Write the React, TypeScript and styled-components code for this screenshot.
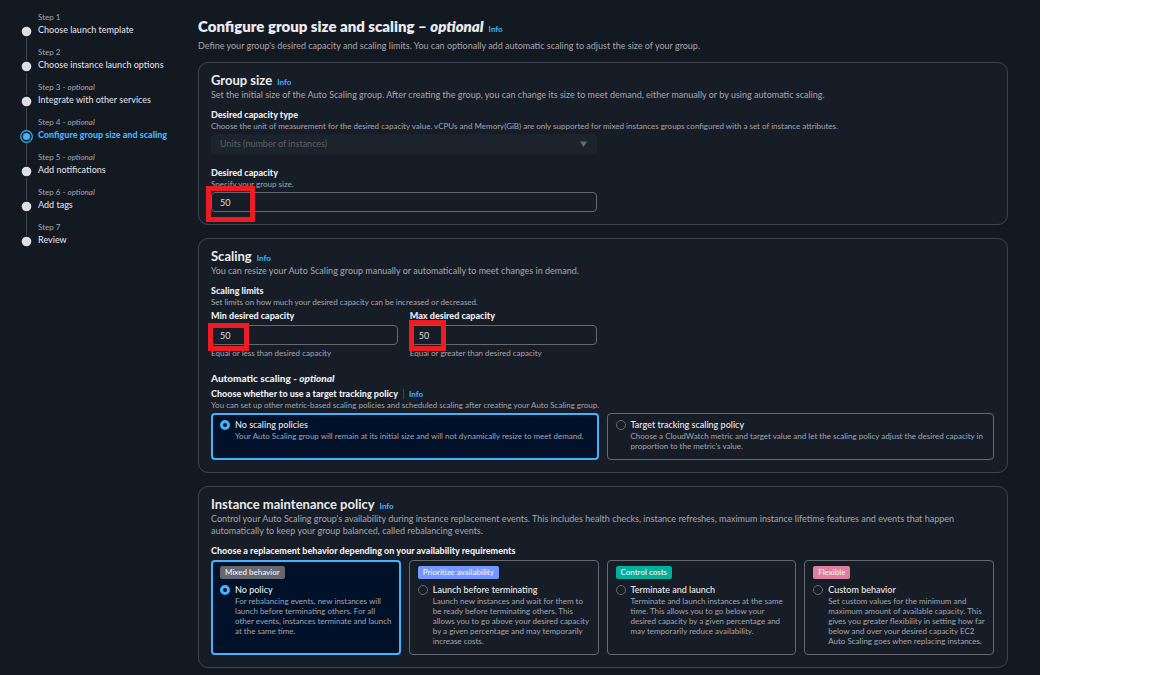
import React, { useState } from "react";
import styled, { createGlobalStyle, css } from "styled-components";

const color = {
  page: "#131920",
  card: "#171d26",
  cardBorder: "#3f434e",
  controlBorder: "#656871",
  heading: "#ebebf0",
  text: "#dedee3",
  muted: "#a4a6ae",
  disabledText: "#5b6069",
  disabledFill: "#1b232d",
  accent: "#42b4ff",
  selectedFill: "#001129",
  mark: "#ed1c24",
};

const GlobalStyle = createGlobalStyle`
  *, *::before, *::after { box-sizing: border-box; }
  html { background: #ffffff; }
  body {
    margin: 0;
    font-family: Lato, "Open Sans", sans-serif;
    font-size: 9px;
    line-height: 12px;
    color: ${color.text};
  }
  h1, h2, h3, p, ol, fieldset { margin: 0; padding: 0; border: 0; }
`;

const Page = styled.div`
  display: flex;
  align-items: flex-start;
  min-height: 100vh;
  margin-right: 112px;
  padding: 12px 32px 7px 20px;
  background: ${color.page};
`;

const Steps = styled.nav`
  flex: 0 0 178px;
`;

const StepList = styled.ol`
  list-style: none;
`;

const Step = styled.li`
  display: flex;
  gap: 5px;
  height: 35px;
`;

const Rail = styled.div`
  display: flex;
  flex-direction: column;
  align-items: center;
  width: 13px;
`;

const Line = styled.span<{ $grow?: boolean; $hidden?: boolean }>`
  width: 1px;
  flex: ${(p) => (p.$grow ? "1" : "0 0 13px")};
  background: ${(p) => (p.$hidden ? "transparent" : "#424650")};
`;

const StepNumber = styled.div`
  margin-bottom: 2px;
  font-size: 8px;
  line-height: 10px;
  color: ${color.muted};
`;

const StepLink = styled.a<{ $active?: boolean }>`
  display: block;
  white-space: nowrap;
  text-decoration: none;
  color: ${(p) => (p.$active ? color.accent : color.text)};
  font-weight: ${(p) => (p.$active ? 900 : 500)};
`;

const Main = styled.main`
  flex: 1;
  min-width: 0;
`;

const PageHeader = styled.header`
  display: flex;
  flex-direction: column;
  gap: 3px;
  padding: 4px 0 10px;
`;

const PageTitle = styled.h1`
  font-size: 15px;
  line-height: 20px;
  font-weight: 800;
  color: ${color.heading};
`;

const InfoLink = styled.a`
  margin-left: 5px;
  font-size: 8px;
  line-height: 8px;
  font-weight: 700;
  color: ${color.accent};
  text-decoration: none;
`;

const Description = styled.p`
  margin-top: 1px;
  color: ${color.muted};
`;

const Cards = styled.div`
  display: flex;
  flex-direction: column;
  gap: 13px;
`;

const Card = styled.section`
  padding: 9px 13px 12px 12px;
  border: 1px solid ${color.cardBorder};
  border-radius: 10px;
  background: ${color.card};
`;

const CardTitle = styled.h2`
  font-size: 13px;
  line-height: 16px;
  font-weight: 700;
  color: ${color.heading};
`;

const Group = styled.div<{ $gap?: number }>`
  margin-top: ${(p) => p.$gap ?? 8}px;
`;

const labelText = css`
  display: block;
  font-size: 9px;
  line-height: 12px;
  font-weight: 900;
  color: ${color.heading};
`;

const Label = styled.label`
  ${labelText}
`;

const GroupTitle = styled.h3<{ $large?: boolean }>`
  ${labelText}
  ${(p) => p.$large && "font-size: 10px;"}
`;

const Caption = styled.p`
  font-size: 8px;
  line-height: 10px;
  color: ${color.muted};
`;

const Columns = styled.div<{ $count: number; $gap: number }>`
  display: grid;
  grid-template-columns: repeat(${(p) => p.$count}, minmax(0, 1fr));
  gap: ${(p) => p.$gap}px;
`;

const Control = styled.div`
  position: relative;
  margin-top: 3px;
  & + ${Caption} {
    margin-top: 3px;
  }
`;

const controlBox = css`
  display: block;
  width: 100%;
  height: 20px;
  padding: 0 8px;
  border-radius: 4px;
  font: inherit;
`;

const TextInput = styled.input`
  ${controlBox}
  border: 1px solid ${color.controlBorder};
  background: ${color.card};
  color: ${color.text};
`;

const Select = styled.select`
  ${controlBox}
  appearance: none;
  border: 1px solid ${color.disabledFill};
  background: ${color.disabledFill};
  color: ${color.disabledText};
  opacity: 1;
`;

const Caret = styled.svg`
  position: absolute;
  top: 7px;
  right: 10px;
  pointer-events: none;
`;

const Highlight = styled.span<{ $x: number; $y: number; $w: number; $h: number }>`
  position: absolute;
  left: ${(p) => p.$x}px;
  top: ${(p) => p.$y}px;
  width: ${(p) => p.$w}px;
  height: ${(p) => p.$h}px;
  border: 5px solid ${color.mark};
  pointer-events: none;
`;

const LabelRow = styled.div`
  display: flex;
  align-items: center;
`;

const Divider = styled.span`
  width: 1px;
  height: 10px;
  margin-left: 5px;
  background: #424650;
`;

const Tiles = styled(Columns).attrs({ as: "fieldset" })`
  margin-top: 3px;
  min-width: 0;
`;

const Tile = styled.label<{ $selected: boolean; $height: number }>`
  display: block;
  min-height: ${(p) => p.$height}px;
  padding: ${(p) => (p.$selected ? "4px 6px 4px 7px" : "5px 7px 5px 8px")};
  border: ${(p) => (p.$selected ? `2px solid ${color.accent}` : `1px solid ${color.controlBorder}`)};
  border-radius: 4px;
  background: ${(p) => (p.$selected ? color.selectedFill : "transparent")};
`;

const Badge = styled.span<{ $fill: string }>`
  display: table;
  margin-bottom: 5px;
  padding: 0 5px;
  border-radius: 2px;
  background: ${(p) => p.$fill};
  color: #f3f3f7;
  font-size: 8px;
  line-height: 13px;
  font-weight: 500;
`;

const Option = styled.span`
  display: flex;
  gap: 5px;
`;

const Radio = styled.input`
  appearance: none;
  flex: 0 0 10px;
  width: 10px;
  height: 10px;
  margin: 1px 0 0;
  border: 1px solid ${color.controlBorder};
  border-radius: 50%;
  background: transparent;
  &:checked {
    border: 3px solid ${color.accent};
    background: ${color.selectedFill};
  }
`;

const OptionName = styled.span`
  display: block;
  font-weight: 500;
  color: ${color.heading};
`;

const OptionText = styled.span`
  display: block;
  font-size: 8px;
  line-height: 10px;
  color: ${color.muted};
`;

type Choice = { name: string; text: string; badge?: string; fill?: string };

const steps = [
  { name: "Choose launch template" },
  { name: "Choose instance launch options" },
  { name: "Integrate with other services", optional: true },
  { name: "Configure group size and scaling", optional: true },
  { name: "Add notifications", optional: true },
  { name: "Add tags", optional: true },
  { name: "Review" },
];

const scalingChoices: Choice[] = [
  {
    name: "No scaling policies",
    text: "Your Auto Scaling group will remain at its initial size and will not dynamically resize to meet demand.",
  },
  {
    name: "Target tracking scaling policy",
    text: "Choose a CloudWatch metric and target value and let the scaling policy adjust the desired capacity in proportion to the metric's value.",
  },
];

const maintenanceChoices: Choice[] = [
  {
    badge: "Mixed behavior",
    fill: "#656871",
    name: "No policy",
    text: "For rebalancing events, new instances will launch before terminating others. For all other events, instances terminate and launch at the same time.",
  },
  {
    badge: "Prioritize availability",
    fill: "#7598ff",
    name: "Launch before terminating",
    text: "Launch new instances and wait for them to be ready before terminating others. This allows you to go above your desired capacity by a given percentage and may temporarily increase costs.",
  },
  {
    badge: "Control costs",
    fill: "#00b09b",
    name: "Terminate and launch",
    text: "Terminate and launch instances at the same time. This allows you to go below your desired capacity by a given percentage and may temporarily reduce availability.",
  },
  {
    badge: "Flexible",
    fill: "#e07f9d",
    name: "Custom behavior",
    text: "Set custom values for the minimum and maximum amount of available capacity. This gives you greater flexibility in setting how far below and over your desired capacity EC2 Auto Scaling goes when replacing instances.",
  },
];

function StepDot({ active }: { active: boolean }) {
  return (
    <svg width="13" height="13" viewBox="0 0 13 13" aria-hidden="true">
      {active ? (
        <>
          <circle cx="6.5" cy="6.5" r="5.8" fill="none" stroke={color.accent} strokeWidth="1.2" />
          <circle cx="6.5" cy="6.5" r="3.6" fill={color.accent} />
        </>
      ) : (
        <circle cx="6.5" cy="6.5" r="4.8" fill={color.text} />
      )}
    </svg>
  );
}

function ChoiceTiles({ name, choices, gap, height }: { name: string; choices: Choice[]; gap: number; height: number }) {
  const [selected, setSelected] = useState(0);
  return (
    <Tiles $count={choices.length} $gap={gap} aria-label={name}>
      {choices.map((c, i) => (
        <Tile key={c.name} $selected={i === selected} $height={height}>
          {c.badge && <Badge $fill={c.fill ?? color.controlBorder}>{c.badge}</Badge>}
          <Option>
            <Radio type="radio" name={name} checked={i === selected} onChange={() => setSelected(i)} />
            <span>
              <OptionName>{c.name}</OptionName>
              <OptionText>{c.text}</OptionText>
            </span>
          </Option>
        </Tile>
      ))}
    </Tiles>
  );
}

export default function App() {
  const active = 3;
  return (
    <>
      <GlobalStyle />
      <Page>
        <Steps aria-label="Steps">
          <StepList>
            {steps.map((s, i) => (
              <Step key={s.name}>
                <Rail>
                  <Line $hidden={i === 0} />
                  <StepDot active={i === active} />
                  <Line $grow $hidden={i === steps.length - 1} />
                </Rail>
                <div>
                  <StepNumber>
                    Step {i + 1}
                    {s.optional && (
                      <>
                        {" "}- <i>optional</i>
                      </>
                    )}
                  </StepNumber>
                  <StepLink href="#" $active={i === active}>
                    {s.name}
                  </StepLink>
                </div>
              </Step>
            ))}
          </StepList>
        </Steps>

        <Main>
          <PageHeader>
            <PageTitle>
              Configure group size and scaling – <i>optional</i>
              <InfoLink href="#">Info</InfoLink>
            </PageTitle>
            <Description>
              Define your group's desired capacity and scaling limits. You can optionally add automatic scaling to
              adjust the size of your group.
            </Description>
          </PageHeader>

          <Cards>
            <Card>
              <CardTitle>
                Group size
                <InfoLink href="#">Info</InfoLink>
              </CardTitle>
              <Description>
                Set the initial size of the Auto Scaling group. After creating the group, you can change its size to
                meet demand, either manually or by using automatic scaling.
              </Description>
              <Group>
                <Label htmlFor="capacity-type">Desired capacity type</Label>
                <Caption>
                  Choose the unit of measurement for the desired capacity value. vCPUs and Memory(GiB) are only
                  supported for mixed instances groups configured with a set of instance attributes.
                </Caption>
                <Columns $count={2} $gap={12}>
                  <Control>
                    <Select id="capacity-type" disabled>
                      <option>Units (number of instances)</option>
                    </Select>
                    <Caret width="7" height="6" viewBox="0 0 7 6" aria-hidden="true">
                      <path d="M0 0.5h7L3.5 6z" fill={color.controlBorder} />
                    </Caret>
                  </Control>
                </Columns>
              </Group>
              <Group $gap={13}>
                <Label htmlFor="desired">Desired capacity</Label>
                <Caption>Specify your group size.</Caption>
                <Columns $count={2} $gap={12}>
                  <Control>
                    <TextInput id="desired" defaultValue="50" />
                    <Highlight $x={-5} $y={-6} $w={49} $h={36} />
                  </Control>
                </Columns>
              </Group>
            </Card>

            <Card>
              <CardTitle>
                Scaling
                <InfoLink href="#">Info</InfoLink>
              </CardTitle>
              <Description>
                You can resize your Auto Scaling group manually or automatically to meet changes in demand.
              </Description>
              <Group>
                <GroupTitle>Scaling limits</GroupTitle>
                <Caption>Set limits on how much your desired capacity can be increased or decreased.</Caption>
              </Group>
              <Group $gap={3}>
                <Columns $count={2} $gap={12}>
                  <Columns $count={2} $gap={12}>
                    <div>
                      <Label htmlFor="min">Min desired capacity</Label>
                      <Control>
                        <TextInput id="min" defaultValue="50" />
                        <Highlight $x={-3} $y={-2} $w={41} $h={28} />
                      </Control>
                      <Caption>Equal or less than desired capacity</Caption>
                    </div>
                    <div>
                      <Label htmlFor="max">Max desired capacity</Label>
                      <Control>
                        <TextInput id="max" defaultValue="50" />
                        <Highlight $x={-1} $y={-5} $w={37} $h={31} />
                      </Control>
                      <Caption>Equal or greater than desired capacity</Caption>
                    </div>
                  </Columns>
                </Columns>
              </Group>
              <Group $gap={14}>
                <GroupTitle $large>
                  Automatic scaling - <i>optional</i>
                </GroupTitle>
              </Group>
              <Group $gap={4}>
                <LabelRow>
                  <GroupTitle>Choose whether to use a target tracking policy</GroupTitle>
                  <Divider />
                  <InfoLink href="#">Info</InfoLink>
                </LabelRow>
                <Caption>
                  You can set up other metric-based scaling policies and scheduled scaling after creating your Auto
                  Scaling group.
                </Caption>
                <ChoiceTiles name="Scaling policy" choices={scalingChoices} gap={8} height={47} />
              </Group>
            </Card>

            <Card>
              <CardTitle>
                Instance maintenance policy
                <InfoLink href="#">Info</InfoLink>
              </CardTitle>
              <Description>
                Control your Auto Scaling group's availability during instance replacement events. This includes health
                checks, instance refreshes, maximum instance lifetime features and events that happen automatically to
                keep your group balanced, called rebalancing events.
              </Description>
              <Group>
                <GroupTitle>Choose a replacement behavior depending on your availability requirements</GroupTitle>
                <ChoiceTiles name="Replacement behavior" choices={maintenanceChoices} gap={8} height={95} />
              </Group>
            </Card>
          </Cards>
        </Main>
      </Page>
    </>
  );
}
